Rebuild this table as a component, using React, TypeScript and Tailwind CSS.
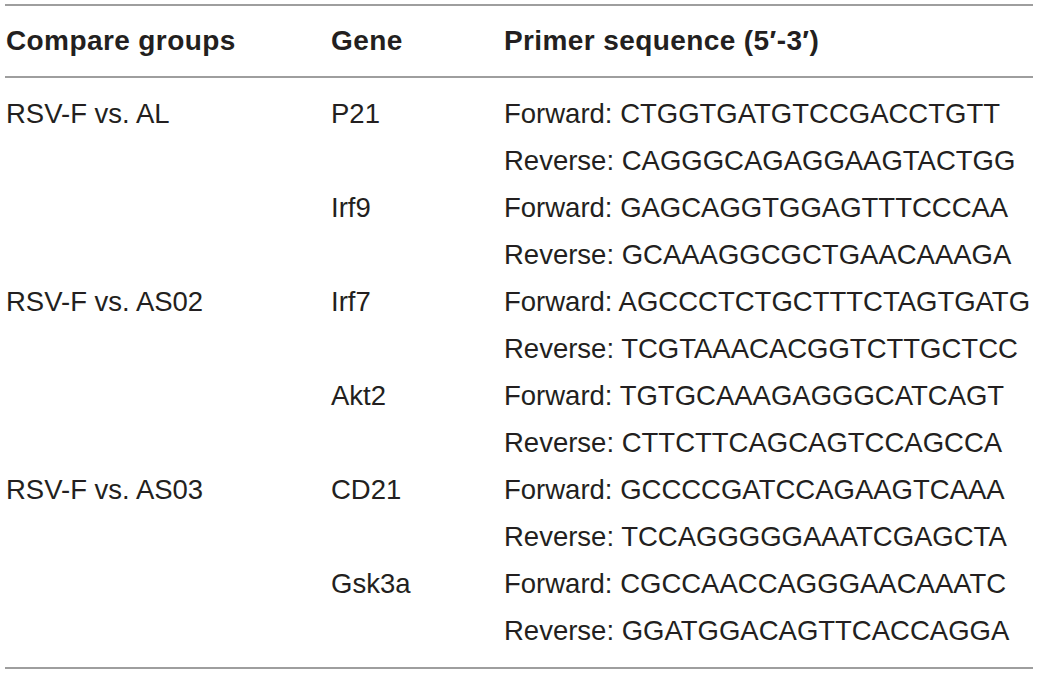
const rows: [string, string, string][] = [
  ["RSV-F vs. AL", "P21", "Forward: CTGGTGATGTCCGACCTGTT"],
  ["", "", "Reverse: CAGGGCAGAGGAAGTACTGG"],
  ["", "Irf9", "Forward: GAGCAGGTGGAGTTTCCCAA"],
  ["", "", "Reverse: GCAAAGGCGCTGAACAAAGA"],
  ["RSV-F vs. AS02", "Irf7", "Forward: AGCCCTCTGCTTTCTAGTGATG"],
  ["", "", "Reverse: TCGTAAACACGGTCTTGCTCC"],
  ["", "Akt2", "Forward: TGTGCAAAGAGGGCATCAGT"],
  ["", "", "Reverse: CTTCTTCAGCAGTCCAGCCA"],
  ["RSV-F vs. AS03", "CD21", "Forward: GCCCCGATCCAGAAGTCAAA"],
  ["", "", "Reverse: TCCAGGGGGAAATCGAGCTA"],
  ["", "Gsk3a", "Forward: CGCCAACCAGGGAACAAATC"],
  ["", "", "Reverse: GGATGGACAGTTCACCAGGA"],
];

export default function App() {
  return (
    <div className="w-[1039px] h-[674px] bg-white pt-[4px] pl-[5px] pr-[6px] font-['Liberation_Sans',Arial,sans-serif] text-[#231f20]">
      <div className="h-[2px] bg-[#9e9e9e]" />
      <div className="grid grid-cols-[325px_173px_1fr] h-[70px] items-center text-[28px] font-bold pl-[1px]">
        <div className="tracking-[0.4px]">Compare groups</div>
        <div className="tracking-[0.4px]">Gene</div>
        <div className="tracking-[0.4px]">Primer sequence (5′-3′)</div>
      </div>
      <div className="h-[2px] bg-[#9e9e9e]" />
      <div className="pt-[12px] pb-[13px] pl-[1px] text-[27.5px]">
        {rows.map(([group, gene, primer], i) => (
          <div key={i} className="grid grid-cols-[325px_173px_1fr] h-[47px] items-center whitespace-nowrap">
            <div>{group}</div>
            <div>{gene}</div>
            <div>{primer}</div>
          </div>
        ))}
      </div>
      <div className="h-[2px] bg-[#9e9e9e]" />
    </div>
  );
}
